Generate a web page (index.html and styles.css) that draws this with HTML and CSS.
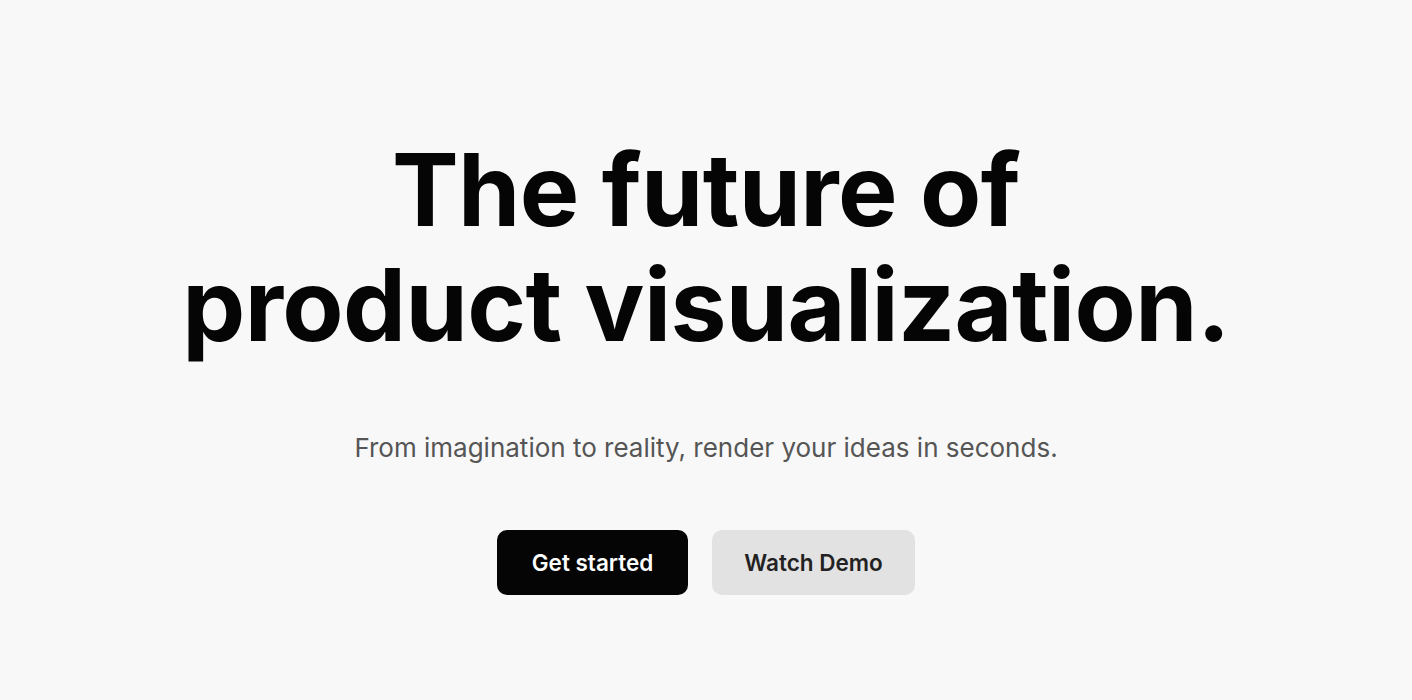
FILE: index.html
```html
<!DOCTYPE html>
<html lang="en">
<head>
<meta charset="utf-8">
<title>Product visualization</title>
<link rel="stylesheet" href="styles.css">
</head>
<body>
<main class="hero">
  <h1 class="hero-title">The future of<br>product visualization.</h1>
  <p class="hero-sub">From imagination to reality, render your ideas in seconds.</p>
  <div class="hero-actions">
    <a class="btn btn-primary" href="#">Get started</a>
    <a class="btn btn-secondary" href="#">Watch Demo</a>
  </div>
</main>
</body>
</html>
```

FILE: styles.css
```css
* { box-sizing: border-box; }
html, body { margin: 0; padding: 0; }
body {
  background: #f8f8f8;
  font-family: Inter, "Noto Sans", sans-serif;
  color: #050505;
  height: 700px;
  overflow: hidden;
}
.hero {
  display: flex;
  flex-direction: column;
  align-items: center;
  padding-top: 132px;
  text-align: center;
}
.hero-title {
  margin: 0;
  font-size: 100px;
  font-weight: 700;
  line-height: 115px;
  letter-spacing: -0.6px;
}
.hero-sub {
  margin: 70px 0 0;
  font-size: 26px;
  line-height: 32px;
  color: #555555;
}
.hero-actions {
  display: flex;
  gap: 24px;
  margin-top: 66px;
}
.btn {
  display: flex;
  align-items: center;
  justify-content: center;
  height: 65px;
  border-radius: 10px;
  font-size: 22.5px;
  font-weight: 600;
  text-decoration: none;
}
.btn-primary {
  width: 191px;
  background: #050505;
  color: #ffffff;
}
.btn-secondary {
  width: 203px;
  background: #e2e2e2;
  color: #222222;
}
```
